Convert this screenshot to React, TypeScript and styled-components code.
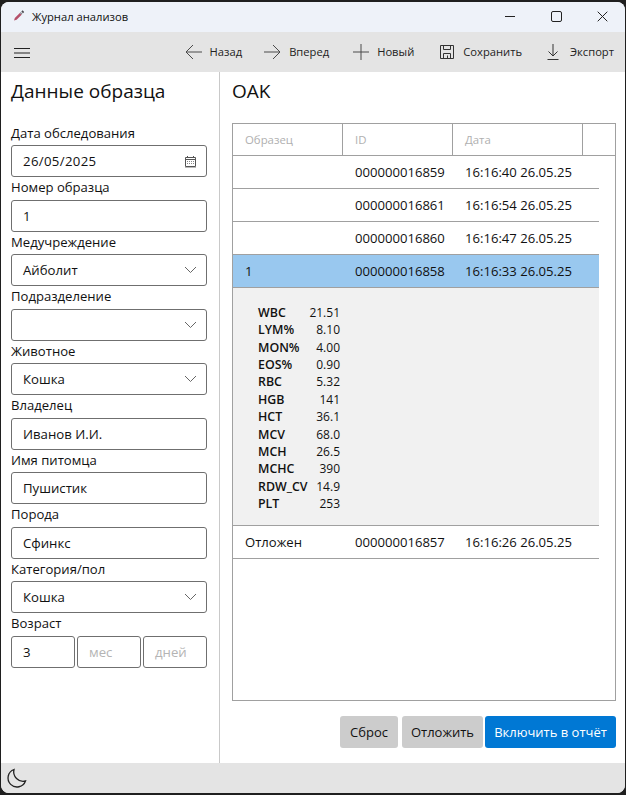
import React from 'react'
import styled, { createGlobalStyle } from 'styled-components'

const FONT = `"Open Sans", "Noto Sans", "Liberation Sans", sans-serif`

const GlobalStyle = createGlobalStyle`
  html, body {
    margin: 0;
    padding: 0;
    height: 795px;
    background: #1f1f1f;
    font-family: ${FONT};
    color: #111;
  }
  * { box-sizing: border-box; }
`

const Screen = styled.div`
  width: 626px;
  height: 795px;
  padding: 2px 1px 2px 1px;
  overflow: hidden;
`
const Win = styled.div`
  height: 100%;
  display: flex;
  flex-direction: column;
  background: #fff;
  border-radius: 8px;
  overflow: hidden;
`
const TitleBar = styled.div`
  height: 30px;
  flex: none;
  display: flex;
  align-items: center;
  background: #eef2f9;
  padding: 0 0 2px 10px;
`
const AppIcon = styled.svg`
  width: 16px;
  height: 16px;
  margin-right: 5px;
`
const TitleText = styled.span`
  font-size: 11.2px;
  flex: 1;
`
const WinButton = styled.div`
  width: 46px;
  height: 28px;
  display: flex;
  align-items: center;
  justify-content: center;
`
const ToolBar = styled.div`
  height: 40px;
  flex: none;
  display: flex;
  align-items: center;
  background: #e4e4e4;
  padding: 0 11px 0 12px;
`
const Burger = styled.svg`
  width: 18px;
  height: 12px;
  margin: 1px auto 0 0;
`
const ToolButton = styled.div<{ $gap: number; $left: number }>`
  display: flex;
  align-items: center;
  gap: ${p => p.$gap}px;
  margin-left: ${p => p.$left}px;
  font-size: 11.2px;
  line-height: 16px;
  color: #222;
`
const ToolIcon = styled.svg`
  width: 18px;
  height: 18px;
  flex: none;
`
const Body = styled.div`
  flex: 1;
  display: flex;
  min-height: 0;
`
const Side = styled.aside`
  width: 219px;
  flex: none;
  border-right: 1px solid #c9c9c9;
  padding: 0 12px 0 10px;
`
const SideTitle = styled.h2`
  margin: 0 0 18.5px;
  padding-top: 6px;
  font-size: 19px;
  line-height: 26px;
  font-weight: 400;
`
const Label = styled.div`
  font-size: 13.1px;
  line-height: 21.56px;
  height: 22.56px;
  white-space: nowrap;
`
const Field = styled.div<{ $muted?: boolean }>`
  height: 32px;
  flex: 1;
  min-width: 0;
  display: flex;
  align-items: center;
  justify-content: space-between;
  padding: 0 9px 0 11px;
  background: #fff;
  border: 1px solid #6f6f6f;
  border-radius: 3px;
  font-size: 13.2px;
  color: ${p => (p.$muted ? '#b4b4b4' : '#111')};
  white-space: nowrap;
`
const DateValue = styled.span`
  letter-spacing: 0.35px;
`
const FieldRow = styled.div`
  display: flex;
  gap: 2px;
`
const Chevron = styled.svg`
  width: 13px;
  height: 8px;
  flex: none;
`
const Main = styled.main`
  flex: 1;
  min-width: 0;
  display: flex;
  flex-direction: column;
  padding: 6px 9px 15px 12px;
`
const MainTitle = styled.h2`
  margin: 0 0 19px;
  font-size: 19px;
  line-height: 26px;
  font-weight: 400;
`
const TableBox = styled.div`
  flex: 1;
  border: 1px solid #a0a0a0;
  min-height: 0;
`
const HeadRow = styled.div`
  height: 32px;
  display: grid;
  grid-template-columns: 110px 110px 130px 1fr;
  border-bottom: 1px solid #a0a0a0;
`
const HeadCell = styled.div`
  display: flex;
  align-items: center;
  padding-left: 12px;
  font-size: 11.4px;
  color: #b0b0b0;
  border-right: 1px solid #a0a0a0;
  &:last-child { border-right: 0; }
`
const Row = styled.div<{ $selected?: boolean }>`
  width: 366px;
  height: 33px;
  display: grid;
  grid-template-columns: 110px 110px 130px;
  align-items: center;
  border-bottom: 1px solid #a0a0a0;
  background: ${p => (p.$selected ? '#99c8ef' : 'transparent')};
  font-size: 13.1px;
`
const Cell = styled.div`
  padding-left: 12px;
  white-space: nowrap;
`
const Details = styled.div`
  width: 366px;
  height: 238px;
  background: #f1f1f1;
  border-bottom: 1px solid #a0a0a0;
  padding: 12px 0 0 25px;
`
const DetailGrid = styled.div`
  display: inline-grid;
  grid-template-columns: 82px;
  font-size: 12px;
  line-height: 17.36px;
`
const DetailRow = styled.div`
  display: flex;
  justify-content: space-between;
`
const DetailName = styled.span`
  font-weight: 600;
  font-size: 12.4px;
`
const Actions = styled.div`
  flex: none;
  display: flex;
  justify-content: flex-end;
  margin-top: 15px;
`
const ActionButton = styled.div<{ $primary?: boolean; $left: number; $width: number }>`
  width: ${p => p.$width}px;
  height: 32px;
  margin-left: ${p => p.$left}px;
  display: flex;
  align-items: center;
  justify-content: center;
  border-radius: 3px;
  font-size: 13px;
  background: ${p => (p.$primary ? '#0078d4' : '#cccccc')};
  color: ${p => (p.$primary ? '#fff' : '#111')};
`
const StatusBar = styled.div`
  height: 30px;
  flex: none;
  background: #e4e4e4;
  display: flex;
  align-items: center;
  padding-left: 5px;
`

const rows = [
  { sample: '', id: '000000016859', date: '16:16:40 26.05.25' },
  { sample: '', id: '000000016861', date: '16:16:54 26.05.25' },
  { sample: '', id: '000000016860', date: '16:16:47 26.05.25' },
]

const analysis = [
  ['WBC', '21.51'],
  ['LYM%', '8.10'],
  ['MON%', '4.00'],
  ['EOS%', '0.90'],
  ['RBC', '5.32'],
  ['HGB', '141'],
  ['HCT', '36.1'],
  ['MCV', '68.0'],
  ['MCH', '26.5'],
  ['MCHC', '390'],
  ['RDW_CV', '14.9'],
  ['PLT', '253'],
]

const ChevronDown = () => (
  <Chevron viewBox="0 0 13 8">
    <path d="M1 1l5.5 5.5L12 1" fill="none" stroke="#666" strokeWidth="1" />
  </Chevron>
)

const CalendarIcon = () => (
  <svg width="13" height="13" viewBox="0 0 13 13">
    <path d="M1.5 2.5h10v9h-10z" fill="none" stroke="#555" />
    <path d="M1 4.5h11" stroke="#555" />
    <path d="M3.5 1v2M9.5 1v2" stroke="#555" />
    <path d="M3 6.5h7M3 8.5h7" stroke="#888" strokeDasharray="1 1" />
    <path d="M1 12.5h11" stroke="#bbb" />
  </svg>
)

const Select = ({ value }: { value?: string }) => (
  <Field>
    <span>{value}</span>
    <ChevronDown />
  </Field>
)

export default function App() {
  return (
    <Screen>
      <GlobalStyle />
      <Win>
        <TitleBar>
          <AppIcon viewBox="0 0 16 16">
            <path d="M3 12.5l.8-2.6 5-5 1.8 1.8-5 5z" fill="#b5506a" />
            <path d="M8.8 4.9l1.8 1.8.9-.9-1.8-1.8z" fill="#8a8a92" />
            <path d="M10.3 3.4l1.3-1.1 1.6 1.6-1.2 1.3z" fill="#4a4a50" />
          </AppIcon>
          <TitleText>Журнал анализов</TitleText>
          <WinButton>
            <svg width="10" height="10" viewBox="0 0 10 10">
              <path d="M0 5.5h10" stroke="#222" />
            </svg>
          </WinButton>
          <WinButton>
            <svg width="11" height="11" viewBox="0 0 11 11">
              <rect x="0.5" y="0.5" width="10" height="10" rx="1.5" fill="none" stroke="#222" />
            </svg>
          </WinButton>
          <WinButton>
            <svg width="11" height="11" viewBox="0 0 11 11">
              <path d="M.7.7l9.6 9.6M10.3.7L.7 10.3" stroke="#222" />
            </svg>
          </WinButton>
        </TitleBar>

        <ToolBar>
          <Burger viewBox="0 0 18 12">
            <path d="M1 1.5h16M1 6h16M1 10.5h16" stroke="#222" />
          </Burger>
          <ToolButton $gap={7} $left={0}>
            <ToolIcon viewBox="0 0 18 18">
              <path d="M17 9H1M8 2L1 9l7 7" fill="none" stroke="#4a4a4a" />
            </ToolIcon>
            Назад
          </ToolButton>
          <ToolButton $gap={8} $left={21}>
            <ToolIcon viewBox="0 0 18 18">
              <path d="M1 9h16M10 2l7 7-7 7" fill="none" stroke="#4a4a4a" />
            </ToolIcon>
            Вперед
          </ToolButton>
          <ToolButton $gap={7} $left={23}>
            <ToolIcon viewBox="0 0 18 18">
              <path d="M1 9h16M9 1v16" fill="none" stroke="#4a4a4a" />
            </ToolIcon>
            Новый
          </ToolButton>
          <ToolButton $gap={7} $left={24}>
            <ToolIcon viewBox="0 0 18 18">
              <path d="M2.5 2.5h13v13h-13z" fill="none" stroke="#333" />
              <path d="M5.5 2.5v4h7v-4M5.5 15.5v-5h7v5M9.5 12.5v3" fill="none" stroke="#333" />
            </ToolIcon>
            Сохранить
          </ToolButton>
          <ToolButton $gap={8} $left={22}>
            <ToolIcon viewBox="0 0 18 18">
              <path d="M9 1v12M4.5 8.5L9 13l4.5-4.5M3.5 16.5h11" fill="none" stroke="#333" />
            </ToolIcon>
            Экспорт
          </ToolButton>
        </ToolBar>

        <Body>
          <Side>
            <SideTitle>Данные образца</SideTitle>
            <Label>Дата обследования</Label>
            <Field>
              <DateValue>26/05/2025</DateValue>
              <CalendarIcon />
            </Field>
            <Label>Номер образца</Label>
            <Field>1</Field>
            <Label>Медучреждение</Label>
            <Select value="Айболит" />
            <Label>Подразделение</Label>
            <Select />
            <Label>Животное</Label>
            <Select value="Кошка" />
            <Label>Владелец</Label>
            <Field>Иванов И.И.</Field>
            <Label>Имя питомца</Label>
            <Field>Пушистик</Field>
            <Label>Порода</Label>
            <Field>Сфинкс</Field>
            <Label>Категория/пол</Label>
            <Select value="Кошка" />
            <Label>Возраст</Label>
            <FieldRow>
              <Field>3</Field>
              <Field $muted>мес</Field>
              <Field $muted>дней</Field>
            </FieldRow>
          </Side>

          <Main>
            <MainTitle>OAK</MainTitle>
            <TableBox>
              <HeadRow>
                <HeadCell>Образец</HeadCell>
                <HeadCell>ID</HeadCell>
                <HeadCell>Дата</HeadCell>
                <HeadCell />
              </HeadRow>
              {rows.map(r => (
                <Row key={r.id}>
                  <Cell>{r.sample}</Cell>
                  <Cell>{r.id}</Cell>
                  <Cell>{r.date}</Cell>
                </Row>
              ))}
              <Row $selected>
                <Cell>1</Cell>
                <Cell>000000016858</Cell>
                <Cell>16:16:33 26.05.25</Cell>
              </Row>
              <Details>
                <DetailGrid>
                  {analysis.map(([name, value]) => (
                    <DetailRow key={name}>
                      <DetailName>{name}</DetailName>
                      <span>{value}</span>
                    </DetailRow>
                  ))}
                </DetailGrid>
              </Details>
              <Row>
                <Cell>Отложен</Cell>
                <Cell>000000016857</Cell>
                <Cell>16:16:26 26.05.25</Cell>
              </Row>
            </TableBox>
            <Actions>
              <ActionButton $left={0} $width={58}>Сброс</ActionButton>
              <ActionButton $left={4} $width={81}>Отложить</ActionButton>
              <ActionButton $left={2} $width={131} $primary>Включить в отчёт</ActionButton>
            </Actions>
          </Main>
        </Body>

        <StatusBar>
          <svg width="21" height="21" viewBox="0 0 21 21">
            <path d="M8 1.5a9 9 0 1 0 11.5 11.5A9.5 9.5 0 0 1 8 1.5z" fill="none" stroke="#222" strokeWidth="1.3" />
          </svg>
        </StatusBar>
      </Win>
    </Screen>
  )
}
